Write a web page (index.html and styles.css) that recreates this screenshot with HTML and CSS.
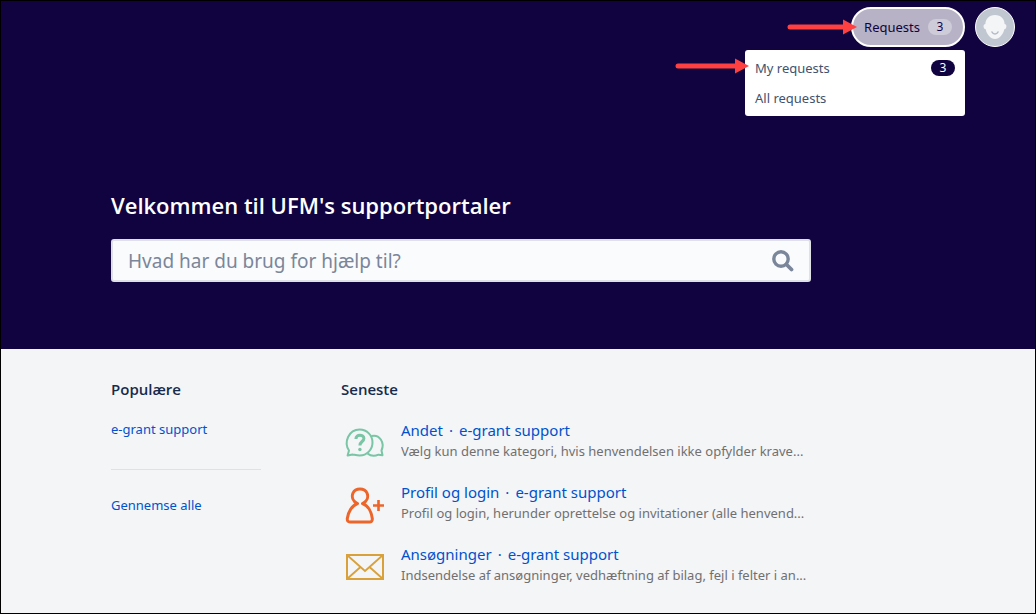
FILE: index.html
```html
<!DOCTYPE html>
<html lang="da">
  <head>
    <meta charset="UTF-8" />
    <meta name="viewport" content="width=device-width, initial-scale=1.0" />
    <title>UFM supportportaler</title>
    <link rel="stylesheet" href="styles.css">
  </head>
  <body>
    <div class="page">
      <!-- Hero with top navigation and search -->
      <div class="hero">
        <header class="topbar">
          <div class="requests">
            <button type="button" class="requests-button" aria-expanded="true">
              Requests <span class="count count-light">3</span>
            </button>
            <nav class="dropdown">
              <a href="#">My requests <span class="count count-dark">3</span></a>
              <a href="#">All requests</a>
            </nav>
            <svg class="arrow arrow-button" width="70" height="16" viewBox="0 0 70 16">
              <path d="M3 8H58" stroke="#ff4040" stroke-width="5" stroke-linecap="round" />
              <path d="M56 0.5L70 8L56 15.5Z" fill="#ff4040" />
            </svg>
            <svg class="arrow arrow-menu" width="74" height="16" viewBox="0 0 74 16">
              <path d="M3 8H62" stroke="#ff4040" stroke-width="5" stroke-linecap="round" />
              <path d="M60 0.5L74 8L60 15.5Z" fill="#ff4040" />
            </svg>
          </div>
          <button type="button" class="avatar" aria-label="Profile">
            <svg width="38" height="38" viewBox="0 0 38 38">
              <path d="M19 7C13 7 9.500 11 9.400 16C7 16.200 6.800 20.600 9.700 21.300C10.800 26.500 14.500 31 19 31C23.500 31 27.200 26.500 28.300 21.300C31.200 20.600 31 16.200 28.600 16C28.500 11 25 7 19 7Z" fill="#f4f5f7" />
              <path d="M16 24C17.300 26.600 20.700 26.600 22 24" fill="none" stroke="#b3bac5" stroke-width="1.600" stroke-linecap="round" />
            </svg>
          </button>
        </header>

        <div class="content">
          <h1>Velkommen til UFM's supportportaler</h1>
          <form class="search">
            <input type="text" aria-label="Søg" placeholder="Hvad har du brug for hjælp til?" />
            <button type="submit" aria-label="Søg">
              <svg width="22" height="22" viewBox="0 0 22 22" fill="none" stroke="#7a869a">
                <circle cx="9" cy="9" r="7.200" stroke-width="3.400" />
                <path d="M14.500 14.500L19.500 19.500" stroke-width="3.800" stroke-linecap="round" />
              </svg>
            </button>
          </form>
        </div>
      </div>

      <!-- Portals and recent request types -->
      <main class="content columns">
        <section class="popular">
          <h2>Populære</h2>
          <a href="#">e-grant support</a>
          <hr />
          <a href="#">Gennemse alle</a>
        </section>

        <section class="recent">
          <h2>Seneste</h2>
          <ul>
            <li>
              <svg width="48" height="48" viewBox="0 0 48 48" fill="none" stroke="#79c5a5" stroke-width="2" stroke-linejoin="round">
                <path d="M6.600 36.500L8 31.500C2.500 23.500 7.500 10.500 18.700 10.500C26 10.500 31.500 16.500 31.500 23.500C31.500 30.500 26 36.500 18.700 36.500C15.800 36.500 13.500 35.800 11.500 35.500Z" />
                <path d="M30.500 17C38.500 15 44 23.500 40.500 31.500L41.500 36.300L37.500 35.700C33.500 37.500 29.500 37 26.500 34.500" />
                <path d="M14.900 20C14.900 15 22.900 15.200 22.900 19.500C22.900 22.600 18.900 22.500 18.900 26.500" stroke-width="3" />
                <circle cx="18.900" cy="30.500" r="1.700" fill="#79c5a5" stroke="none" />
              </svg>
              <div class="text">
                <a href="#">Andet<span class="dot">·</span>e-grant support</a>
                <p>Vælg kun denne kategori, hvis henvendelsen ikke opfylder krave...</p>
              </div>
            </li>
            <li>
              <svg width="48" height="48" viewBox="0 0 48 48" fill="none" stroke="#ec652b" stroke-width="3" stroke-linejoin="round">
                <path d="M16.500 22.500C11.500 20 10.500 15.500 12 12C14.500 6.500 23.500 6.500 26 12C27.500 15.500 26.500 20 21.500 22.500C27 24.500 30.500 31 31.300 37.500C31.500 40 30.300 41 28.500 41H9C7 41 6.100 39.800 6.300 37.500C7 31 11 24.500 16.500 22.500Z" />
                <path d="M32 24.500H43M37.500 19V30" stroke-width="2.600" />
              </svg>
              <div class="text">
                <a href="#">Profil og login<span class="dot">·</span>e-grant support</a>
                <p>Profil og login, herunder oprettelse og invitationer (alle henvend...</p>
              </div>
            </li>
            <li>
              <svg width="48" height="48" viewBox="0 0 48 48" fill="none" stroke="#d9a13b" stroke-width="2">
                <path d="M6 12H42V36H6Z" />
                <path d="M6 12L24 28L42 12M6 36L19.500 24M42 36L28.500 24" stroke-width="1.800" />
              </svg>
              <div class="text">
                <a href="#">Ansøgninger<span class="dot">·</span>e-grant support</a>
                <p>Indsendelse af ansøgninger, vedhæftning af bilag, fejl i felter i an...</p>
              </div>
            </li>
          </ul>
        </section>
      </main>
    </div>
  </body>
</html>
```
FILE: styles.css
```css
/* General Styles */
* {
  box-sizing: border-box;
}

body {
  margin: 0;
  font-family: "Noto Sans", "Open Sans", sans-serif;
  font-size: 13px;
  line-height: 20px;
  color: #172b4d;
}

.page {
  min-height: 100vh;
  border: 1px solid #000;
  background-color: #f4f5f7;
}

.content {
  max-width: 810px;
  padding-left: 110px;
}

a {
  color: #0052cc;
  text-decoration: none;
}

a:hover {
  text-decoration: underline;
}

button {
  font: inherit;
  cursor: pointer;
}

h1,
h2 {
  margin: 0;
  font-family: "Open Sans", sans-serif;
  font-weight: 600;
}

/* Hero */
.hero {
  background-color: #110240;
  padding-bottom: 67px;
}

.topbar {
  display: flex;
  justify-content: flex-end;
  gap: 10px;
  padding: 6px 20px;
}

.requests {
  position: relative;
}

.requests-button {
  display: flex;
  align-items: center;
  gap: 8px;
  height: 40px;
  padding: 0 11px;
  border: 2px solid #fff;
  border-radius: 20px;
  background-color: #b7b2c5;
  color: #110240;
}

.count {
  width: 24px;
  border-radius: 8px;
  font-size: 12px;
  line-height: 16px;
  text-align: center;
}

.count-light {
  background-color: #cfccd9;
}

.count-dark {
  background-color: #110240;
  color: #fff;
}

.avatar {
  display: flex;
  width: 40px;
  height: 40px;
  padding: 0;
  border: 1px solid #fff;
  border-radius: 50%;
  background-color: #c1c7d0;
}

/* Open menu under the requests button */
.dropdown {
  position: absolute;
  top: 43px;
  right: 0;
  width: 220px;
  padding: 3px 0;
  border-radius: 3px;
  background-color: #fff;
}

.dropdown a {
  display: flex;
  align-items: center;
  justify-content: space-between;
  height: 30px;
  padding: 0 10px;
  color: #42526e;
}

.arrow {
  position: absolute;
}

.arrow-button {
  top: 12px;
  right: 108px;
}

.arrow-menu {
  top: 51px;
  right: 216px;
}

h1 {
  padding-top: 136px;
  color: #fff;
  font-size: 22px;
  line-height: 32px;
}

.search {
  display: flex;
  margin-top: 18px;
  height: 43px;
  border: 2px solid #dfe1e6;
  border-radius: 3px;
  background-color: #fafbfc;
}

.search input {
  flex: 1;
  min-width: 0;
  padding: 0 15px;
  border: none;
  outline: none;
  background: none;
  color: #172b4d;
  font: inherit;
  font-size: 19px;
}

.search input::placeholder {
  color: #7a869a;
  opacity: 1;
}

.search button {
  display: flex;
  align-items: center;
  padding: 0 15px;
  border: none;
  background: none;
}

/* Columns */
.columns {
  display: grid;
  grid-template-columns: 150px 1fr;
  gap: 80px;
  padding-top: 30px;
}

h2 {
  font-size: 15px;
  line-height: 20px;
}

.popular a {
  display: block;
}

.popular h2 {
  margin-bottom: 20px;
}

.popular hr {
  margin: 30px 0 25px;
  border: none;
  border-top: 1px solid #dfe1e6;
}

.recent {
  min-width: 0;
}

.recent ul {
  margin: 20px 0 0;
  padding: 0;
  list-style: none;
}

.recent li {
  display: flex;
  gap: 12px;
  height: 62px;
}

.recent svg {
  flex: none;
}

.recent .text {
  min-width: 0;
}

.recent .text a {
  display: block;
  font-size: 15px;
  line-height: 22px;
}

.dot {
  margin: 0 6px;
}

.recent p {
  margin: 0;
  overflow: hidden;
  color: #707070;
  font-size: 13px;
  line-height: 20px;
  white-space: nowrap;
}
```
